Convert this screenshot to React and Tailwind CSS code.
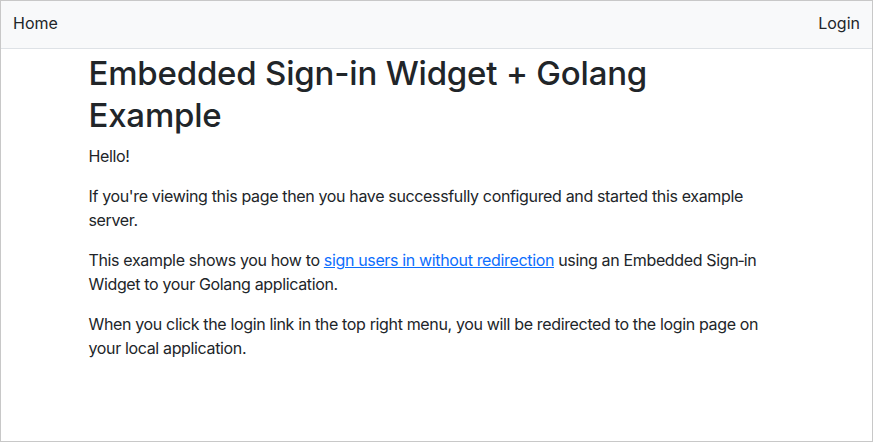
export default function App() {
  return (
    <div className="h-[443px] w-[874px] bg-white font-['Inter',sans-serif] text-[16px] leading-6 text-[#212529]">
      <div className="flex h-[442px] w-[873px] flex-col border border-[#c8c8c8]">
        <nav className="flex h-[48px] items-center justify-between border-b border-[#dee2e6] bg-[#f8f9fa] px-3 pb-[3px]">
          <a className="text-[#212529]" href="#">Home</a>
          <a className="text-[#212529]" href="#">Login</a>
        </nav>
        <main className="mx-auto w-[720px] px-3 pt-[3px] tracking-[-0.35px]">
          <h1 className="mb-2 text-[33px] font-medium leading-[42px] tracking-[-0.2px]">
            Embedded Sign-in Widget + Golang Example
          </h1>
          <p className="mb-4">Hello!</p>
          <p className="mb-4">
            If you're viewing this page then you have successfully configured and started this example server.
          </p>
          <p className="mb-4">
            This example shows you how to{" "}
            <a className="text-[#0d6efd] underline" href="#">sign users in without redirection</a>{" "}
            using an Embedded Sign&#8209;in Widget to your Golang application.
          </p>
          <p className="mb-4">
            When you click the login link in the top right menu, you will be redirected to the login page on your local application.
          </p>
        </main>
      </div>
    </div>
  );
}
